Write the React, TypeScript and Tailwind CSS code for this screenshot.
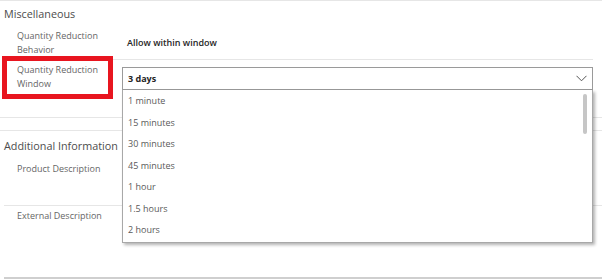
const options = ["1 minute", "15 minutes", "30 minutes", "45 minutes", "1 hour", "1.5 hours", "2 hours"];

const Chevron = () => (
    <svg className="w-[11px] h-[7px]" viewBox="0 0 11 7" fill="none" stroke="#555" strokeWidth={1}>
        <path d="M0.5 0.8l5 5 5-5" />
    </svg>
);

export default function App() {
    return (
        <div className="relative w-[602px] h-[279px] overflow-hidden bg-white font-['Open_Sans',sans-serif]">
            {/* Miscellaneous */}
            <div className="border-t border-b border-[#e6e6e6]">
                <div className="pl-[4px] pt-[5px] h-[24px] text-[10.8px] leading-[16px] text-[#4c4c4c]">Miscellaneous</div>

                <div className="ml-[4px] w-[589px] h-[35px] flex items-center border-b border-[#e6e6e6]">
                    <div className="w-[118px] pl-[13px] pt-[1px] text-[9px] leading-[14px] text-[#666]">
                        Quantity Reduction
                        <br />
                        Behavior
                    </div>
                    <div className="pl-[5px] pt-[1px] text-[9px] font-semibold text-[#262626]">Allow within window</div>
                </div>

                <div className="relative ml-[4px] w-[589px] h-[57px] flex items-start">
                    <div className="w-[118px] pl-[13px] pt-[3px] text-[9px] leading-[13.5px] text-[#666]">
                        Quantity Reduction
                        <br />
                        Window
                    </div>
                    <div className="relative flex-1 mt-[7px]">
                        <div className="h-[23px] flex items-center justify-between pl-[5px] pr-[5px] border border-[#9a9a9a] bg-white">
                            <span className="pt-[1px] text-[9px] font-bold text-[#262626]">3 days</span>
                            <Chevron />
                        </div>
                        {/* open option list */}
                        <div className="absolute z-10 left-0 right-0 top-[23px] h-[153px] bg-white border border-t-0 border-[#a8a8a8] shadow-[2px_2px_3px_rgba(0,0,0,0.3)]">
                            {options.map((o) => (
                                <div key={o} className="h-[21.5px] flex items-center pl-[5px] text-[9px] text-[#595959]">
                                    {o}
                                </div>
                            ))}
                            <div className="absolute right-[5px] top-[4px] w-[4px] h-[40px] rounded-full bg-[#c6c6c6]"></div>
                        </div>
                    </div>
                    {/* annotation */}
                    <div className="absolute left-[-2px] top-[-4px] w-[111px] h-[43px] border-[5px] border-[#e8151f]"></div>
                </div>
            </div>

            {/* Additional Information */}
            <div className="mt-[12px] border-t border-[#e6e6e6]">
                <div className="pl-[4px] pt-[7px] h-[23px] text-[10.8px] leading-[16px] text-[#4c4c4c]">Additional Information</div>
                <div className="ml-[4px] h-[52px] pt-[8px] border-b border-[#e6e6e6]">
                    <div className="pl-[13px] text-[9px] leading-[14px] text-[#666]">Product Description</div>
                </div>
                <div className="ml-[4px] h-[73px] pt-[3px] border-b-2 border-[#cfcfcf]">
                    <div className="pl-[13px] text-[9px] leading-[14px] text-[#666]">External Description</div>
                </div>
            </div>
        </div>
    );
}
